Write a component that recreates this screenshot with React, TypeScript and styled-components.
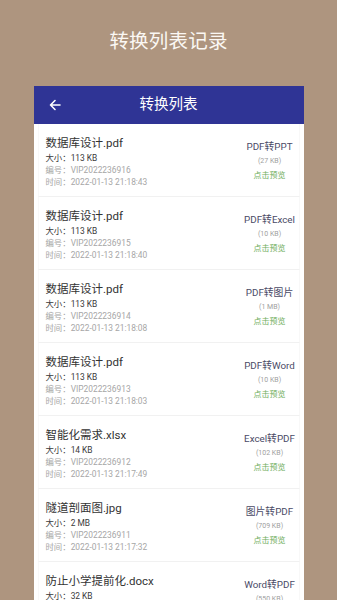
import React from "react";
import styled, { createGlobalStyle } from "styled-components";

const Global = createGlobalStyle`
  html, body { margin: 0; padding: 0; background: #ae957f; }
  body { font-family: Roboto, "Noto Sans CJK SC", sans-serif; }
`;

const Page = styled.div`
  width: 337px;
  height: 600px;
  overflow: hidden;
  background: #ae957f;
  display: flex;
  flex-direction: column;
  align-items: center;
`;

const PageTitle = styled.h1`
  margin: 29px 0 0;
  height: 26px;
  line-height: 26px;
  font-size: 19.5px;
  font-weight: 400;
  color: #fbf8f4;
  letter-spacing: 0.2px;
`;

const Card = styled.div`
  margin-top: 31px;
  width: 270px;
  background: #fff;
  display: flex;
  flex-direction: column;
`;

const Header = styled.div`
  height: 38px;
  background: #2f3495;
  display: flex;
  align-items: center;
  position: relative;
  justify-content: center;
`;

const Back = styled.span`
  position: absolute;
  left: 14px;
  top: 12px;
  width: 14px;
  height: 14px;
  display: flex;
`;

const HeaderTitle = styled.span`
  color: #fff;
  font-size: 14.5px;
  line-height: 20px;
`;

const Row = styled.div`
  height: 72px;
  margin: 0 4px;
  border-bottom: 1px solid #f1f1f1;
  border-left: 1px solid #f8f8f8;
  border-right: 1px solid #f8f8f8;
  background: #fff;
  display: flex;
  align-items: stretch;
  padding: 0 0 0 7px;
`;

const Left = styled.div`
  flex: 1;
  display: flex;
  flex-direction: column;
  padding-top: 11px;
`;

const Name = styled.div`
  font-size: 11.5px;
  line-height: 16px;
  color: #333;
  margin-bottom: 1px;
`;

const Info = styled.div<{ $dark?: boolean }>`
  font-size: 8.4px;
  line-height: 12px;
  color: ${(p) => (p.$dark ? "#3a3a3a" : "#a6a6a6")};
`;

const Right = styled.div`
  width: 58px;
  display: flex;
  flex-direction: column;
  align-items: center;
  padding-top: 16px;
`;

const Kind = styled.div`
  font-size: 9.8px;
  line-height: 14px;
  color: #4a4a66;
  white-space: nowrap;
`;

const Size = styled.div`
  font-size: 7px;
  line-height: 15px;
  color: #a0a0a0;
`;

const Preview = styled.div`
  font-size: 8px;
  line-height: 13px;
  color: #6fae5c;
`;

const rows = [
  { name: "数据库设计.pdf", size: "113 KB", code: "VIP2022236916", time: "2022-01-13 21:18:43", kind: "PDF转PPT", out: "(27 KB)" },
  { name: "数据库设计.pdf", size: "113 KB", code: "VIP2022236915", time: "2022-01-13 21:18:40", kind: "PDF转Excel", out: "(10 KB)" },
  { name: "数据库设计.pdf", size: "113 KB", code: "VIP2022236914", time: "2022-01-13 21:18:08", kind: "PDF转图片", out: "(1 MB)" },
  { name: "数据库设计.pdf", size: "113 KB", code: "VIP2022236913", time: "2022-01-13 21:18:03", kind: "PDF转Word", out: "(10 KB)" },
  { name: "智能化需求.xlsx", size: "14 KB", code: "VIP2022236912", time: "2022-01-13 21:17:49", kind: "Excel转PDF", out: "(102 KB)" },
  { name: "隧道剖面图.jpg", size: "2 MB", code: "VIP2022236911", time: "2022-01-13 21:17:32", kind: "图片转PDF", out: "(709 KB)" },
  { name: "防止小学提前化.docx", size: "32 KB", code: "VIP2022236910", time: "2022-01-13 21:17:10", kind: "Word转PDF", out: "(550 KB)" },
];

export default function App() {
  return (
    <Page>
      <Global />
      <PageTitle>转换列表记录</PageTitle>
      <Card>
        <Header>
          <Back>
            <svg width="14" height="14" viewBox="0 0 14 14" fill="none" stroke="#fff" strokeWidth="1.6" strokeLinecap="round" strokeLinejoin="round">
              <path d="M12 7H2.5M7 2.5L2.5 7L7 11.5" />
            </svg>
          </Back>
          <HeaderTitle>转换列表</HeaderTitle>
        </Header>
        {rows.map((r) => (
          <Row key={r.code}>
            <Left>
              <Name>{r.name}</Name>
              <Info $dark>大小：{r.size}</Info>
              <Info>编号：{r.code}</Info>
              <Info>时间：{r.time}</Info>
            </Left>
            <Right>
              <Kind>{r.kind}</Kind>
              <Size>{r.out}</Size>
              <Preview>点击预览</Preview>
            </Right>
          </Row>
        ))}
      </Card>
    </Page>
  );
}
